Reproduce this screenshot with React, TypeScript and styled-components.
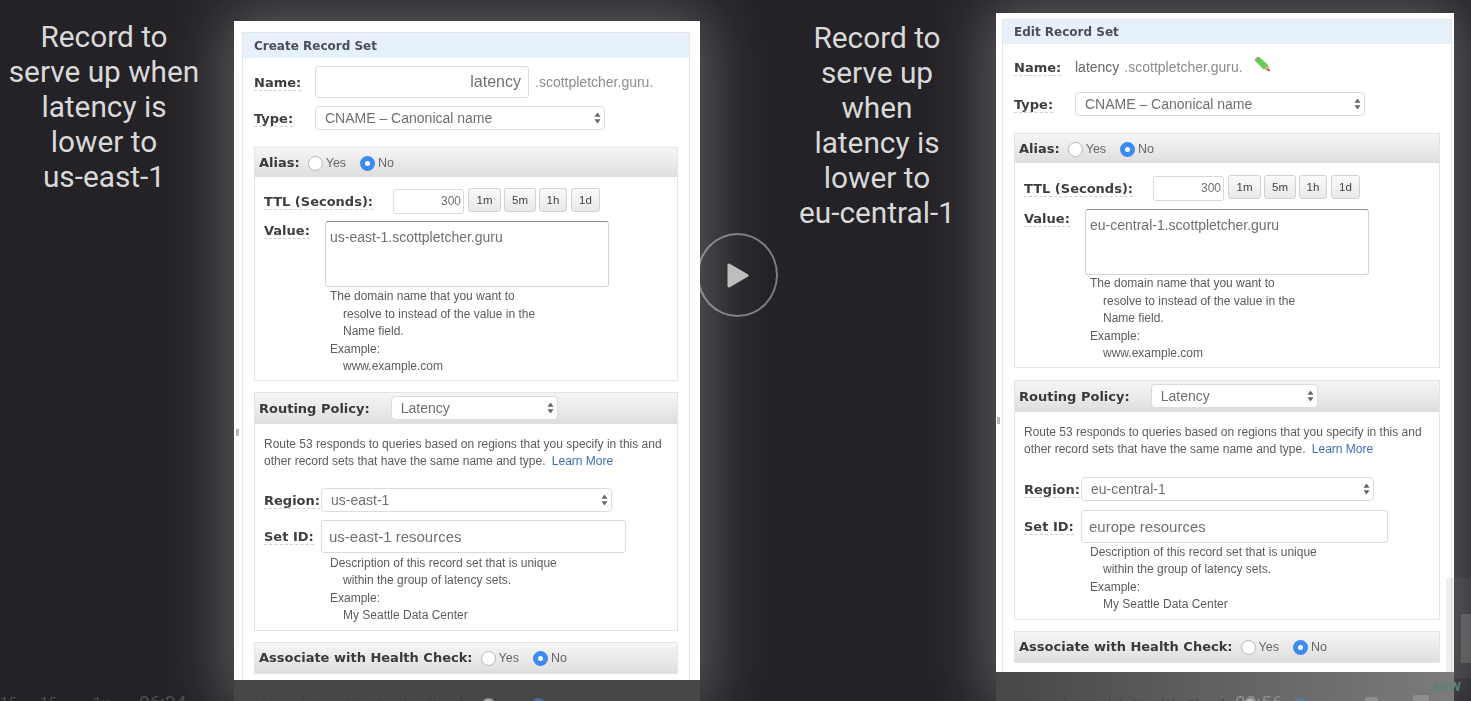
import React from 'react';
import styled, { createGlobalStyle } from 'styled-components';

const GlobalStyle = createGlobalStyle`
  html,
  body {
    margin: 0;
    padding: 0;
    background: #242226;
  }
`;

const Stage = styled.div`
  position: relative;
  display: flex;
  align-items: flex-start;
  width: 1471px;
  height: 701px;
  overflow: hidden;
  background: #242226;
`;

const Caption = styled.div<{ $left: number; $top: number }>`
  flex: none;
  width: 208px;
  margin-left: ${(p) => p.$left}px;
  padding-top: ${(p) => p.$top}px;
  font-family: Roboto, sans-serif;
  font-size: 29.8px;
  line-height: 34.9px;
  text-align: center;
  color: #d9d9d9;
`;

const Slide = styled.div<{ $width: number; $top: number; $left: number }>`
  flex: none;
  width: ${(p) => p.$width}px;
  margin-top: ${(p) => p.$top}px;
  margin-left: ${(p) => p.$left}px;
  box-shadow: 0 0 60px 8px rgba(255, 255, 255, 0.28);
`;

const Panel = styled.div<{ $height: number; $padTop: number; $padLeft: number; $padRight: number }>`
  height: ${(p) => p.$height}px;
  overflow: hidden;
  box-sizing: border-box;
  padding: ${(p) => p.$padTop}px ${(p) => p.$padRight}px 0 ${(p) => p.$padLeft}px;
  background: #fff;
  filter: blur(0.45px);
`;

const Frame = styled.div`
  height: 100%;
  box-sizing: border-box;
  border: 1px solid #e2e6ea;
  border-bottom: 0;
  font-family: 'Liberation Sans', sans-serif;
  color: #666;
`;

const FrameTitle = styled.div<{ $height: number }>`
  height: ${(p) => p.$height}px;
  display: flex;
  align-items: center;
  padding-left: 11px;
  background: #e7f1fc;
  font-family: 'DejaVu Sans', sans-serif;
  font-size: 12px;
  font-weight: 700;
  color: #4a4f55;
`;

const FrameBody = styled.div`
  padding: 0 11px;
`;

const Label = styled.span`
  flex: none;
  font-family: 'DejaVu Sans', sans-serif;
  font-size: 13px;
  font-weight: 700;
  line-height: 16px;
  color: #3e3e42;
  border-bottom: 1px dashed #cfcfcf;
`;

const HeadLabel = styled.span`
  flex: none;
  font-family: 'DejaVu Sans', sans-serif;
  font-size: 13px;
  font-weight: 700;
  color: #3a3a3e;
`;

const TopRow = styled.div<{ $height: number; $top: number }>`
  display: flex;
  align-items: center;
  height: ${(p) => p.$height}px;
  margin-top: ${(p) => p.$top}px;
`;

const LabelCell = styled.div<{ $width: number }>`
  flex: none;
  width: ${(p) => p.$width}px;
`;

const Input = styled.input<{ $width: number; $height: number; $size: number; $pad: number; $right?: boolean }>`
  flex: none;
  box-sizing: border-box;
  width: ${(p) => p.$width}px;
  height: ${(p) => p.$height}px;
  padding: 0 ${(p) => p.$pad}px;
  border: 1px solid #dadada;
  border-radius: 3px;
  outline: none;
  background: #fff;
  font-family: 'Liberation Sans', sans-serif;
  font-size: ${(p) => p.$size}px;
  color: #707070;
  text-align: ${(p) => (p.$right ? 'right' : 'left')};
`;

const Select = styled.div<{ $width: number; $left?: number }>`
  flex: none;
  display: flex;
  align-items: center;
  justify-content: space-between;
  box-sizing: border-box;
  width: ${(p) => p.$width}px;
  height: 24px;
  margin-left: ${(p) => p.$left ?? 0}px;
  padding: 0 3px 0 9px;
  border: 1px solid #dcdcdc;
  border-radius: 4px;
  background: #fff;
  font-size: 14px;
  color: #707070;
`;

const Domain = styled.span<{ $left: number }>`
  margin-left: ${(p) => p.$left}px;
  font-size: 14px;
  color: #8d8d8d;
`;

const NameValue = styled.span`
  font-size: 14px;
  color: #666;
`;

const PencilIcon = styled.svg`
  flex: none;
  margin: 0 0 6px 11px;
`;

const Section = styled.div<{ $top: number }>`
  margin-top: ${(p) => p.$top}px;
  border: 1px solid #e4e4e4;
`;

const SectionHead = styled.div<{ $height: number }>`
  display: flex;
  align-items: center;
  box-sizing: border-box;
  height: ${(p) => p.$height}px;
  padding-left: 4px;
  background: linear-gradient(#f6f6f6, #dedede);
`;

const SectionBody = styled.div<{ $bottom: number }>`
  padding: 0 0 ${(p) => p.$bottom}px 9px;
`;

const RadioGroup = styled.span`
  display: flex;
  align-items: center;
  gap: 3px;
  font-size: 12.5px;
  color: #666;
`;

const RadioDot = styled.span<{ $on?: boolean }>`
  flex: none;
  box-sizing: border-box;
  width: 15px;
  height: 15px;
  border-radius: 50%;
  background: #fff;
  border: ${(p) => (p.$on ? '5.5px solid #3d8bf0' : '1px solid #b8b8b8')};
`;

const RadioRow = styled.div`
  display: flex;
  align-items: center;
  gap: 14px;
  margin: 1px 0 0 8px;
`;

const TtlButton = styled.span<{ $width: number; $left: number }>`
  flex: none;
  display: flex;
  align-items: center;
  justify-content: center;
  box-sizing: border-box;
  width: ${(p) => p.$width}px;
  height: 24px;
  margin: -2px 0 0 ${(p) => p.$left}px;
  border: 1px solid #d2d2d2;
  border-radius: 3px;
  background: linear-gradient(#fafafa, #e9e9e9);
  font-size: 11.5px;
  color: #444;
`;

const ValueRow = styled.div<{ $top: number }>`
  display: flex;
  align-items: flex-start;
  margin-top: ${(p) => p.$top}px;
`;

const ValueBox = styled.textarea`
  flex: none;
  display: block;
  box-sizing: border-box;
  width: 284px;
  height: 66px;
  padding: 8px 4px;
  border: 1px solid #d4d4d4;
  border-top-color: #8f8f8f;
  border-radius: 3px;
  outline: none;
  resize: none;
  overflow: hidden;
  font-family: 'Liberation Sans', sans-serif;
  font-size: 14px;
  line-height: 15px;
  color: #707070;
`;

const Help = styled.div<{ $top?: number }>`
  margin: ${(p) => p.$top ?? 0}px 0 0 66px;
  font-size: 12px;
  line-height: 17.5px;
  color: #5c5c5c;
`;

const HelpIndent = styled.div`
  padding-left: 13px;
`;

const RoutingText = styled.p`
  margin: 12px 0 0;
  font-size: 12px;
  line-height: 17px;
  color: #5c5c5c;
`;

const LearnMore = styled.a`
  margin-left: 3px;
  color: #3b6fb5;
`;

const FormRow = styled.div<{ $top: number }>`
  display: flex;
  align-items: center;
  margin-top: ${(p) => p.$top}px;
`;

const Reflection = styled.div<{ $height: number; $pad: number; $from: string; $to: string }>`
  height: ${(p) => p.$height}px;
  overflow: hidden;
  box-sizing: border-box;
  padding: ${(p) => p.$pad}px 0 0 25px;
  background: linear-gradient(90deg, ${(p) => p.$from}, ${(p) => p.$to});
  filter: blur(0.7px);
`;

const ReflectionRow = styled.div`
  display: flex;
  align-items: flex-start;
  opacity: 0.55;
`;

const PlayButton = styled.button`
  position: absolute;
  left: 697px;
  top: 233px;
  display: flex;
  align-items: center;
  justify-content: center;
  box-sizing: border-box;
  width: 81px;
  height: 84px;
  padding: 0;
  border: 2px solid rgba(255, 255, 255, 0.4);
  border-radius: 50%;
  background: transparent;
`;

const Controls = styled.div`
  position: absolute;
  left: 0;
  top: 695px;
  display: flex;
  font-family: Roboto, sans-serif;
  font-size: 15px;
  line-height: 16px;
  color: #4a4a4c;
`;

const ControlItem = styled.span<{ $width: number }>`
  width: ${(p) => p.$width}px;
`;

const Clock = styled.span<{ $left: number; $color: string }>`
  position: absolute;
  left: ${(p) => p.$left}px;
  top: 692px;
  font-family: Roboto, sans-serif;
  font-size: 19px;
  line-height: 22px;
  color: ${(p) => p.$color};
`;

const ControlIcon = styled.span<{ $left: number; $width: number; $top: number }>`
  position: absolute;
  left: ${(p) => p.$left}px;
  top: ${(p) => p.$top}px;
  width: ${(p) => p.$width}px;
  height: 12px;
  border-radius: 2px;
  background: #8d8d8d;
`;

const NewBadge = styled.span`
  position: absolute;
  left: 1433px;
  top: 680px;
  font-family: Roboto, sans-serif;
  font-size: 13px;
  font-weight: 700;
  line-height: 14px;
  color: #5d8274;
  filter: blur(0.6px);
`;

const EdgeShade = styled.div`
  position: absolute;
  left: 1446px;
  top: 578px;
  width: 25px;
  height: 100px;
  background: rgba(130, 130, 130, 0.12);
`;

const EdgeTab = styled.div`
  position: absolute;
  left: 1461px;
  top: 614px;
  width: 10px;
  height: 49px;
  background: rgba(170, 170, 170, 0.25);
`;

const DragHandle = styled.span<{ $left: number; $top: number }>`
  position: absolute;
  left: ${(p) => p.$left}px;
  top: ${(p) => p.$top}px;
  width: 3px;
  height: 7px;
  background: #b9b9b9;
`;

const Arrows = () => (
  <svg width="7" height="12" viewBox="0 0 7 12" aria-hidden="true">
    <path d="M3.5 0.5 6.5 4.8H.5z M3.5 11.5 .5 7.2h6z" fill="#666" />
  </svg>
);

const Pencil = () => (
  <PencilIcon width="17" height="16" viewBox="0 0 17 16" aria-hidden="true">
    <path d="M3.6.4.4 3.4 1.6 5 5.4 1.4z" fill="#d98f86" />
    <path d="M5.4 1.4 1.6 5 9.6 13 13.8 9z" fill="#5fd24c" stroke="#46ab3c" strokeWidth="0.5" />
    <path d="M13.8 9 9.6 13 16.4 15.4z" fill="#cfa877" />
    <path d="M14.6 12.8 13 14 16.4 15.4z" fill="#555" />
  </PencilIcon>
);

const Radios = () => (
  <RadioRow>
    <RadioGroup>
      <RadioDot />
      Yes
    </RadioGroup>
    <RadioGroup>
      <RadioDot $on />
      No
    </RadioGroup>
  </RadioRow>
);

type RecordFormProps = {
  title: string;
  editing?: boolean;
  value: string;
  region: string;
  setId: string;
};

const RecordForm = ({ title, editing, value, region, setId }: RecordFormProps) => (
  <Frame>
    <FrameTitle $height={editing ? 24 : 25}>{title}</FrameTitle>
    <FrameBody>
      {editing ? (
        <TopRow $height={35} $top={5}>
          <LabelCell $width={61}>
            <Label>Name:</Label>
          </LabelCell>
          <NameValue>latency</NameValue>
          <Domain $left={5}>.scottpletcher.guru.</Domain>
          <Pencil />
        </TopRow>
      ) : (
        <TopRow $height={32} $top={8}>
          <LabelCell $width={61}>
            <Label>Name:</Label>
          </LabelCell>
          <Input $width={214} $height={32} $size={16} $pad={7} $right readOnly value="latency" />
          <Domain $left={6}>.scottpletcher.guru.</Domain>
        </TopRow>
      )}
      <TopRow $height={24} $top={8}>
        <LabelCell $width={61}>
          <Label>Type:</Label>
        </LabelCell>
        <Select $width={290}>
          CNAME – Canonical name
          <Arrows />
        </Select>
      </TopRow>

      <Section $top={17}>
        <SectionHead $height={29}>
          <HeadLabel>Alias:</HeadLabel>
          <Radios />
        </SectionHead>
        <SectionBody $bottom={4}>
          <TopRow $height={26} $top={editing ? 12 : 11}>
            <LabelCell $width={129}>
              <Label>TTL (Seconds):</Label>
            </LabelCell>
            <Input $width={71} $height={25} $size={12} $pad={2} $right readOnly value="300" />
            <TtlButton $width={33} $left={4}>1m</TtlButton>
            <TtlButton $width={32} $left={3}>5m</TtlButton>
            <TtlButton $width={28} $left={3}>1h</TtlButton>
            <TtlButton $width={29} $left={4}>1d</TtlButton>
          </TopRow>
          <ValueRow $top={editing ? 8 : 7}>
            <LabelCell $width={61}>
              <Label>Value:</Label>
            </LabelCell>
            <ValueBox readOnly value={value} />
          </ValueRow>
          <Help $top={editing ? 0 : 1}>
            The domain name that you want to
            <HelpIndent>resolve to instead of the value in the</HelpIndent>
            <HelpIndent>Name field.</HelpIndent>
            Example:
            <HelpIndent>www.example.com</HelpIndent>
          </Help>
        </SectionBody>
      </Section>

      <Section $top={editing ? 12 : 11}>
        <SectionHead $height={31}>
          <HeadLabel>Routing Policy:</HeadLabel>
          <Select $width={167} $left={21}>
            Latency
            <Arrows />
          </Select>
        </SectionHead>
        <SectionBody $bottom={5}>
          <RoutingText>
            Route 53 responds to queries based on regions that you specify in this and
            <br />
            other record sets that have the same name and type.
            <LearnMore> Learn More</LearnMore>
          </RoutingText>
          <FormRow $top={editing ? 19 : 18}>
            <LabelCell $width={57}>
              <Label>Region:</Label>
            </LabelCell>
            <Select $width={editing ? 293 : 291}>
              {region}
              <Arrows />
            </Select>
          </FormRow>
          <FormRow $top={editing ? 9 : 8}>
            <LabelCell $width={57}>
              <Label>Set ID:</Label>
            </LabelCell>
            <Input $width={editing ? 307 : 305} $height={33} $size={15} $pad={7} readOnly value={setId} />
          </FormRow>
          <Help $top={editing ? 1 : 2}>
            Description of this record set that is unique
            <HelpIndent>within the group of latency sets.</HelpIndent>
            Example:
            <HelpIndent>My Seattle Data Center</HelpIndent>
          </Help>
        </SectionBody>
      </Section>

      <Section $top={11}>
        <SectionHead $height={30}>
          <HeadLabel>Associate with Health Check:</HeadLabel>
          <Radios />
        </SectionHead>
      </Section>
    </FrameBody>
  </Frame>
);

const captionLeft = ['Record to', 'serve up when', 'latency is', 'lower to', 'us-east-1'];
const captionRight = ['Record to', 'serve up', 'when', 'latency is', 'lower to', 'eu-central-1'];

const Lines = ({ lines }: { lines: string[] }) => (
  <>
    {lines.map((line) => (
      <div key={line}>{line}</div>
    ))}
  </>
);

export default function App() {
  return (
    <>
      <GlobalStyle />
      <Stage>
        <Caption $left={0} $top={20}>
          <Lines lines={captionLeft} />
        </Caption>
        <Slide $width={466} $top={21} $left={26}>
          <Panel $height={659} $padTop={11} $padLeft={8} $padRight={10}>
            <RecordForm
              title="Create Record Set"
              value="us-east-1.scottpletcher.guru"
              region="us-east-1"
              setId="us-east-1 resources"
            />
          </Panel>
          <Reflection $height={21} $pad={17} $from="#474747" $to="#474747">
            <ReflectionRow>
              <HeadLabel>Associate with Health Check:</HeadLabel>
              <Radios />
            </ReflectionRow>
          </Reflection>
        </Slide>
        <Caption $left={73} $top={21}>
          <Lines lines={captionRight} />
        </Caption>
        <Slide $width={458} $top={13} $left={15}>
          <Panel $height={659} $padTop={6} $padLeft={6} $padRight={2}>
            <RecordForm
              editing
              title="Edit Record Set"
              value="eu-central-1.scottpletcher.guru"
              region="eu-central-1"
              setId="europe resources"
            />
          </Panel>
          <Reflection $height={29} $pad={25} $from="#474747" $to="#7c7c7c">
            <ReflectionRow>
              <HeadLabel>Associate with Health Check:</HeadLabel>
              <Radios />
            </ReflectionRow>
          </Reflection>
        </Slide>
        <DragHandle $left={236} $top={429} />
        <DragHandle $left={997} $top={417} />
        <PlayButton aria-label="Play">
          <svg width="22" height="25" viewBox="0 0 22 25" aria-hidden="true">
            <path d="M2 2 20 12.5 2 23z" fill="#bdbdbd" stroke="#bdbdbd" strokeWidth="3" strokeLinejoin="round" />
          </svg>
        </PlayButton>
        <Controls>
          <ControlItem $width={40}>15</ControlItem>
          <ControlItem $width={53}>15›</ControlItem>
          <ControlItem $width={20}>1x</ControlItem>
        </Controls>
        <Clock $left={139} $color="#4c4c4e">
          06:24
        </Clock>
        <Clock $left={1235} $color="#8e8e8e">
          03:56
        </Clock>
        <ControlIcon $left={1365} $width={13} $top={697} />
        <ControlIcon $left={1413} $width={16} $top={695} />
        <EdgeShade />
        <EdgeTab />
        <NewBadge>NEW</NewBadge>
      </Stage>
    </>
  );
}
